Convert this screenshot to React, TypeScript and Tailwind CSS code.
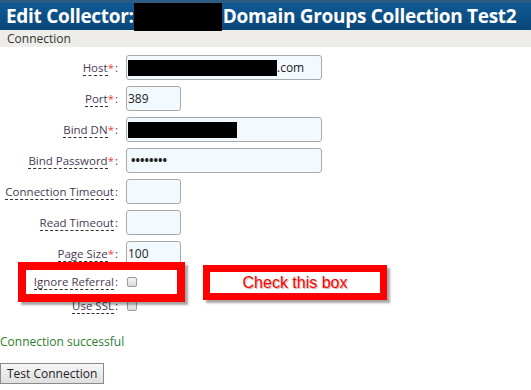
import React from 'react';

type Field = {
  label: string;
  required?: boolean;
  kind: 'wide' | 'short' | 'check';
  value?: React.ReactNode;
};

const fields: Field[] = [
  {
    label: 'Host',
    required: true,
    kind: 'wide',
    value: (
      <span className="flex items-center">
        <span className="inline-block w-[149px] h-[16px] bg-black" />
        <span>.com</span>
      </span>
    ),
  },
  { label: 'Port', required: true, kind: 'short', value: '389' },
  {
    label: 'Bind DN',
    required: true,
    kind: 'wide',
    value: <span className="inline-block w-[109px] h-[16px] bg-black" />,
  },
  {
    label: 'Bind Password',
    required: true,
    kind: 'wide',
    value: <span className="pl-[3px] text-[12px] font-bold">••••••••</span>,
  },
  { label: 'Connection Timeout', kind: 'short' },
  { label: 'Read Timeout', kind: 'short' },
  { label: 'Page Size', required: true, kind: 'short', value: '100' },
];

function Label({ label, required }: { label: string; required?: boolean }) {
  return (
    <div className="w-[118px] shrink-0 text-right text-[11.5px] text-[#4a3a56] whitespace-nowrap">
      <span className="border-b border-dashed border-[#333]">{label}</span>
      {required && <span className="text-[#f0443c]">*</span>}
      <span className="ml-[1px]">:</span>
    </div>
  );
}

function Checkbox() {
  return (
    <span className="inline-block w-[10px] h-[10px] border border-[#9a9a9a] rounded-[2px] bg-gradient-to-b from-[#f4f4f4] to-[#dcdcdc]" />
  );
}

export default function App() {
  return (
    <div
      className="relative w-[531px] h-[390px] bg-white overflow-hidden"
      style={{ fontFamily: '"Open Sans", "DejaVu Sans", sans-serif' }}
    >
      {/* Header */}
      <div className="h-[30px] border-t-[3px] border-[#2c5c84] bg-gradient-to-b from-[#0f5a95] to-[#0a4679] flex items-center flex-nowrap whitespace-nowrap pl-[6px]">
        <span className="text-white font-bold text-[19px] leading-none tracking-[-0.3px]">Edit Collector:</span>
        <span className="inline-block shrink-0 w-[88px] h-[28px] bg-black mt-[1px]" />
        <span className="text-white font-bold text-[19px] leading-none tracking-[-0.3px] ml-[1px]">
          Domain Groups Collection Test2
        </span>
      </div>

      {/* Section bar */}
      <div className="h-[17px] bg-[#eeedea] pl-[7px] text-[12px] leading-[17px] text-[#333]">Connection</div>

      {/* Form */}
      <div className="flex flex-col gap-[6px] pt-[8px]">
        {fields.map(f => (
          <div key={f.label} className="flex items-center h-[25px]">
            <Label label={f.label} required={f.required} />
            <div
              className={`ml-[8px] h-[25px] border border-[#a9a9a9] rounded-[3px] bg-[#f3faff] flex items-center pl-[1px] text-[12px] text-[#222] ${
                f.kind === 'wide' ? 'w-[196px]' : 'w-[55px]'
              }`}
            >
              {f.value}
            </div>
          </div>
        ))}
      </div>

      <div className="flex items-center h-[25px] mt-[3px]">
        <Label label="Ignore Referral" />
        <span className="ml-[9px] flex items-center">
          <Checkbox />
        </span>
      </div>
      <div className="flex items-center h-[24px]">
        <Label label="Use SSL" />
        <span className="ml-[9px] flex items-center">
          <Checkbox />
        </span>
      </div>

      <div className="mt-[15px] text-[12px] leading-[17px] text-[#2e7d2e]">Connection successful</div>

      <button className="mt-[13px] h-[21px] px-[6px] border border-[#8a8a8a] bg-gradient-to-b from-[#f7f7f7] to-[#dedede] text-[12px] text-[#222] leading-none">
        Test Connection
      </button>

      {/* Callout overlays */}
      <div className="absolute left-[18px] top-[262px] w-[167px] h-[40px] border-[8px] border-[#ff0000] shadow-[3px_3px_2px_rgba(0,0,0,0.35)]" />
      <div className="absolute left-[203px] top-[265px] w-[184px] h-[35px] border-[7px] border-[#ff0000] shadow-[3px_3px_2px_rgba(0,0,0,0.35)] flex items-center justify-center">
        <span
          className="text-[#ff0000] text-[16px] leading-none [text-shadow:1px_1px_1px_rgba(0,0,0,0.3)]"
          style={{ fontFamily: '"Liberation Sans", Arial, sans-serif' }}
        >
          Check this box
        </span>
      </div>
    </div>
  );
}
